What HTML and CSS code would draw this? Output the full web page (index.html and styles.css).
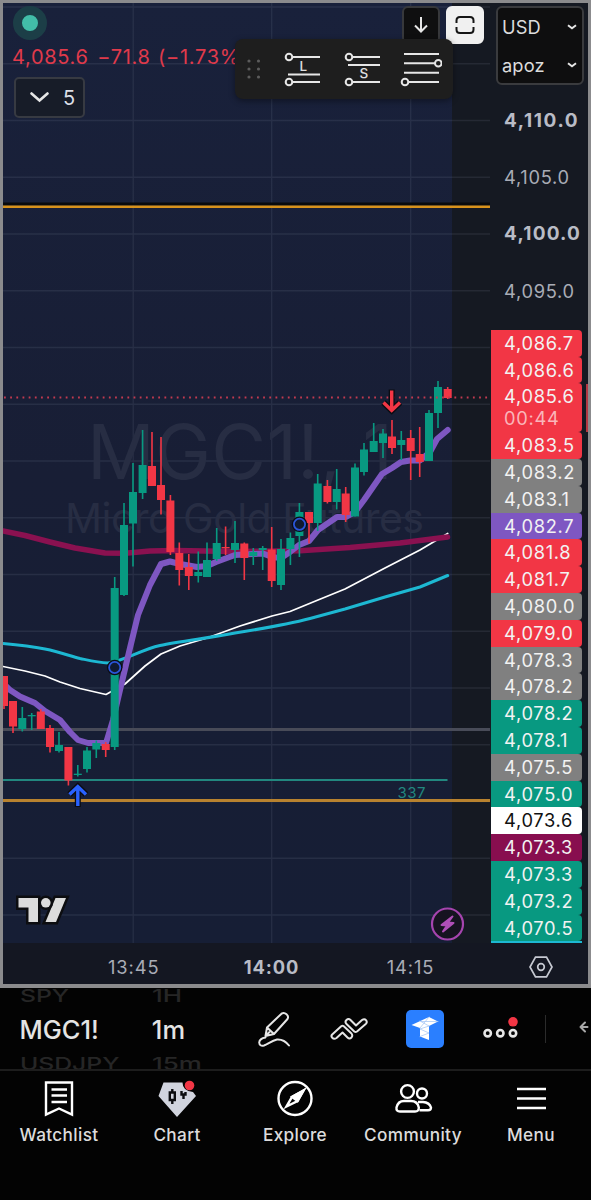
FILE: index.html
```
<!DOCTYPE html>
<html lang="en">
<head>
    <meta charset="UTF-8">
    <meta name="viewport" content="width=device-width, initial-scale=1.0">
    <title>MGC1! | Micro Gold Futures</title>
    <link rel="stylesheet" href="styles.css">
</head>
<body>
    <main class="frame">
        <div class="chart">
            <svg class="plot" viewBox="3 3 487 940" width="487" height="940">
                <defs>
                    <linearGradient id="session" x1="0" y1="0" x2="0" y2="1">
                        <stop offset="0" stop-color="#19213b"/>
                        <stop offset="0.5" stop-color="#181e35"/>
                        <stop offset="1" stop-color="#161e35"/>
                    </linearGradient>
                </defs>
                <rect x="3" y="3" width="449" height="940" fill="url(#session)"/>
                <g id="grid"></g>
                <g class="watermark">
                    <text x="87" y="479" font-size="75" textLength="306">MGC1!, 1</text>
                    <text x="65" y="533" font-size="41" textLength="359">Micro Gold Futures</text>
                </g>
                <path d="M3 204H490" stroke="#090a0d" stroke-width="3"/>
                <path d="M3 206.8H490" stroke="#d8921c" stroke-width="2.4"/>
                <path d="M3 729.5H490" stroke="#484b58" stroke-width="3"/>
                <path d="M3 780H447.5" stroke="#22877f" stroke-width="1.8"/>
                <path d="M3 800.5H490" stroke="#b8822f" stroke-width="3"/>
                <text class="volume" x="397.5" y="798">337</text>
                <g class="averages">
                    <path stroke="#fff" stroke-width="1.7" d="M3 666.5L25 671L45 676L60 682L80 688.5L106 694.5L114 690L125 684L145 666L161 654L180 646L207 638L240 626L272 616L290 611.5L318 600L345 589L385 568L420 550L447.7 533.5"/>
                    <path stroke="#1db8d2" stroke-width="3" d="M3 643.5C20 645 30 646 45 649C60 652 70 656 80 658.5C92 661 98 662.5 108 663C125 661 140 650 160 645.5C180 641 210 638 235 633C260 629 285 625 310 618.5L345 609L385 597L420 587L447.7 575.5"/>
                    <path stroke="#8a1150" stroke-width="5.6" d="M3 531L25 535.5L50 542L75 548L105 553L125 553.3L150 551L175 550.5L235 551.5L300 550.8L350 547.5L400 543L447.5 537"/>
                    <path stroke="#7e57c2" stroke-width="6" d="M3 683L10 690L20 696.5L35 703L45 711L60 720L70 732L78 740L88 743L106 743L113 720L120 690L130 648L138 615L150 585L161 564L170 561.5L180 564L197 567L207 566L216 562L235 555L253 554L263 553.5L272 557L281 558L290 552L299 545L309 541L318 530L337 517L346 517L355 512L364 500L382 474L392 468L401 462L410 460.5L420 460.5L430 452L437 439L447.7 430"/>
                </g>
                <g id="candles"></g>
                <path class="last-price" d="M4 397.5H490"/>
                <g class="markers">
                    <circle class="halo" cx="114.7" cy="667.5" r="7.8"/>
                    <circle cx="114.7" cy="667.5" r="5.6"/>
                    <circle class="halo" cx="299.5" cy="524.3" r="7.8"/>
                    <circle cx="299.5" cy="524.3" r="5.6"/>
                </g>
                <g class="arrow arrow-buy">
                    <path class="halo" d="M77.8 807V787M69.5 794.5L77.8 786.5L86 794.5"/>
                    <path d="M77.8 806V787M69.5 794.5L77.8 786.5L86 794.5"/>
                </g>
                <g class="arrow arrow-sell">
                    <path class="halo" d="M391.7 389.5V410M383.5 402.5L391.7 410.5L400 402.5"/>
                    <path d="M391.7 390.5V410M383.5 402.5L391.7 410.5L400 402.5"/>
                </g>
                <!-- logo -->
                <g fill="#dcdcdc" stroke="#0c0d10" stroke-width="5" paint-order="stroke">
                    <path d="M18.5 898H38V922H28.5V907.5H18.5Z"/>
                    <path d="M55.5 898H66L56 922H45.5Z"/>
                    <circle cx="45.8" cy="902.8" r="4.8"/>
                </g>
                <circle cx="447.5" cy="924" r="15.5" fill="#161320" stroke="#a544ae" stroke-width="2.2"/>
                <path d="M452.5 916.5L441.5 925L447 925.5L443 931.5L453.5 923L448 922.5Z" fill="#b04fb8" stroke="#b04fb8" stroke-linejoin="round"/>
            </svg>

            <aside class="price-axis">
                <div class="currency">
                    <div>USD <svg width="10" height="6" viewBox="0 0 10 6"><path d="M1 1.2L5 4.2L9 1.2"/></svg></div>
                    <div>apoz <svg width="10" height="6" viewBox="0 0 10 6"><path d="M1 1.2L5 4.2L9 1.2"/></svg></div>
                </div>
                <div class="ticks">
                    <span class="bold">4,110.0</span>
                    <span>4,105.0</span>
                    <span class="bold">4,100.0</span>
                    <span>4,095.0</span>
                </div>
                <div class="tags">
                    <span class="red">4,086.7</span>
                    <span class="red">4,086.6</span>
                    <span class="red last">4,085.6<small>00:44</small></span>
                    <span class="red">4,083.5</span>
                    <span class="gray">4,083.2</span>
                    <span class="gray">4,083.1</span>
                    <span class="purple">4,082.7</span>
                    <span class="red">4,081.8</span>
                    <span class="red">4,081.7</span>
                    <span class="gray">4,080.0</span>
                    <span class="red">4,079.0</span>
                    <span class="gray">4,078.3</span>
                    <span class="gray">4,078.2</span>
                    <span class="green">4,078.2</span>
                    <span class="green">4,078.1</span>
                    <span class="gray">4,075.5</span>
                    <span class="green">4,075.0</span>
                    <span class="white">4,073.6</span>
                    <span class="wine">4,073.3</span>
                    <span class="green">4,073.3</span>
                    <span class="green">4,073.2</span>
                    <span class="green">4,070.5</span>
                    <i class="cyan"></i>
                </div>
            </aside>
        </div>

        <div class="time-axis">
            <span>13:45</span>
            <span class="bold">14:00</span>
            <span>14:15</span>
            <svg width="24" height="22" viewBox="0 0 24 22"><path d="M6.5 1.2H17.5L23 11L17.5 20.8H6.5L1 11Z"/><circle cx="12" cy="11" r="3.3"/></svg>
        </div>

        <div class="legend">
            <span class="status"></span>
            <div class="quote"><span>4,085.6</span><span>−71.8</span><span>(−1.73%)</span></div>
            <button class="collapse">
                <svg width="19" height="11" viewBox="0 0 19 11"><path d="M1.5 1.5L9.5 8.5L17.5 1.5"/></svg>
                5
            </button>
        </div>

        <div class="chart-buttons">
            <button><svg width="16" height="18" viewBox="0 0 16 18"><path d="M8 1V15.5M2 9.5L8 15.5L14 9.5"/></svg></button>
            <button class="light"><svg width="20" height="20" viewBox="0 0 20 20"><path d="M1.5 8V5.5Q1.5 2 5 2H15Q18.5 2 18.5 5.5V8M1.5 12V14.5Q1.5 18 5 18H15Q18.5 18 18.5 14.5V12"/></svg></button>
        </div>

        <div class="drawing-bar">
            <svg class="grip" width="14" height="20" viewBox="0 0 14 20">
                <circle cx="2" cy="2" r="1.6"/><circle cx="11.5" cy="2" r="1.6"/>
                <circle cx="2" cy="10" r="1.6"/><circle cx="11.5" cy="10" r="1.6"/>
                <circle cx="2" cy="18" r="1.6"/><circle cx="11.5" cy="18" r="1.6"/>
            </svg>
            <svg width="36" height="36" viewBox="0 0 36 36">
                <circle cx="5" cy="6" r="3.3"/><path d="M8.3 6H36M4 23.5H36M8.3 31H36"/><circle cx="5" cy="31" r="3.3"/>
                <text x="15.5" y="19.5">L</text>
            </svg>
            <svg width="36" height="36" viewBox="0 0 36 36">
                <circle cx="5" cy="6" r="3.3"/><path d="M8.3 6H36M4 14H36M8.3 31H36"/><circle cx="5" cy="31" r="3.3"/>
                <text x="15.5" y="27">S</text>
            </svg>
            <svg class="wide" width="42" height="36" viewBox="0 0 42 36">
                <path d="M4 3H39M4 12.3H35M4 21.7H39M8.3 31H39"/><circle cx="38.3" cy="12.3" r="3.3"/><circle cx="5" cy="31" r="3.3"/>
            </svg>
        </div>
    </main>

    <section class="toolbar">
        <div class="wheel symbol">
            <span>SPY</span>
            <strong>MGC1!</strong>
            <span>USDJPY</span>
        </div>
        <div class="wheel interval">
            <span>1H</span>
            <strong>1m</strong>
            <span>15m</span>
        </div>
        <div class="tools">
            <svg width="32" height="36" viewBox="0 0 32 36">
                <path d="M7.5 25L9 16.5L23.5 2.7Q26 1 28.5 3.2Q31 5.5 29.5 8L16 23Z M9 16.5L16 23M7.5 25L11.5 21"/>
                <path d="M7.5 26.5Q1.5 27.5 1.2 31.5Q1.5 35.5 6 34.5C10 33 14 29.5 19 28.5Q26 28 31 34.5"/>
            </svg>
            <svg width="38" height="24" viewBox="0 0 38 24">
                <path d="M2.2 17.5L11.2 9.2Q12.5 8.2 13.8 9.2L21.5 16.5Q23 18.5 21.5 20.5Q19.5 22.5 17.5 20.5L12.5 15.5L6.5 21Q4 22.5 2.2 20.7Q.7 19 2.2 17.5Z"/>
                <path d="M16.5 3Q18.5 1 20.5 3L26 8.5L32 3Q34.5 1.3 36 3.2Q37.5 5 36 6.7L27 14.5Q25.5 15.5 24.3 14.5L16.5 7Q14.5 5 16.5 3Z"/>
            </svg>
            <svg class="app" width="38" height="38" viewBox="0 0 38 38">
                <rect width="38" height="38" rx="5"/>
                <path d="M5.5 15L23 7L32 11.5L23 16V30L14 26.5V18Z"/>
                <path class="seams" d="M14 11L23 16M14 18L23 7M23 16L14 19L23 23L14 26.5M15 11.5L32 11.5"/>
            </svg>
            <svg width="36" height="24" viewBox="0 0 36 24">
                <g stroke-width="2.6"><circle cx="4.7" cy="16.2" r="3.2"/><circle cx="17.3" cy="16.2" r="3.2"/><circle cx="30" cy="16.2" r="3.2"/></g>
                <circle class="dot" cx="30" cy="4.8" r="4.8"/>
            </svg>
            <i class="divider"></i>
            <svg class="back" width="12" height="14" viewBox="0 0 12 14"><path d="M6 2.5L1.5 7L6 11.5M1.5 7H8.5"/></svg>
        </div>
    </section>

    <nav class="tabs">
        <a>
            <svg width="40" height="38" viewBox="0 0 40 38"><path d="M7 2.5H33V34.5L20 28.5L7 34.5Z"/><path d="M12.5 9.5H28M12.5 15.5H28M12.5 22H28"/></svg>
            Watchlist
        </a>
        <a>
            <svg width="40" height="38" viewBox="0 0 40 38">
                <path class="gem" d="M6.5 2.5H25.5Q25.5 11 36 12L39 16L20 37L1.5 16Z"/>
                <g class="bars"><path d="M12.8 12.5H17.8V20H12.8ZM15.3 9V12M15.3 20.5V24"/><path d="M24.5 11V14.5H28.5V12M26.5 14.5V19"/></g>
                <circle class="dot" cx="32.5" cy="5.5" r="4.8"/>
            </svg>
            Chart
        </a>
        <a>
            <svg width="40" height="38" viewBox="0 0 40 38"><circle cx="20" cy="18.5" r="16.5"/><path d="M28.5 10.5L17 17L11.5 26.5L22.5 21Z"/><path d="M28.5 10.5L17 17L22.5 21Z" fill="#fff"/></svg>
            Explore
        </a>
        <a>
            <svg width="40" height="38" viewBox="0 0 40 38"><circle cx="14.5" cy="11.5" r="6.4"/><circle cx="29" cy="13.5" r="5"/><path d="M7 31.5Q3 31.5 3.5 27.5Q5 21 11 21H18Q24.5 21 25.8 27.5Q26 31.5 22 31.5Z"/><path d="M25 22H30Q36.5 22.5 38 27.5Q38 30.3 35 30.3H26.5"/></svg>
            Community
        </a>
        <a>
            <svg width="40" height="38" viewBox="0 0 40 38"><path d="M6 9H35M6 18.5H35M6 28H35"/></svg>
            Menu
        </a>
    </nav>

    <script>
        // x, high, body top, body bottom, low, direction (1 = up)
        const candles = [
            [4, 676, 676, 706, 709, 0], [13, 701, 701, 726.5, 733, 0], [22.3, 707, 718, 729, 731.5, 1],
            [31.7, 713, 715, 716.3, 730, 1], [40.8, 709, 711.5, 729, 729, 0], [50, 725, 728, 747, 752.5, 0],
            [59, 732, 745, 751, 752.5, 1], [68.4, 747, 747, 780.5, 785.5, 0], [77.8, 765, 773.7, 775, 776.5, 1],
            [87, 747, 750.5, 769, 772.5, 1], [96.3, 740.5, 743, 749.5, 758, 1], [105.7, 742, 744, 750, 757, 0],
            [114.7, 577, 588, 747, 750, 1], [124, 503, 525, 595, 596, 1], [133, 463, 492, 523.5, 566.5, 1],
            [142.6, 430, 465, 493, 499, 1], [152, 432, 466, 486, 486, 0], [161, 437, 485, 500, 514.5, 0],
            [170.4, 495, 500.5, 552, 555, 0], [179.3, 542.5, 553, 570, 585.5, 0], [188.8, 554, 567, 576, 590, 0],
            [198.3, 551.5, 572, 576, 582.5, 1], [207, 542.5, 560, 577, 577, 1], [216.7, 528, 543, 559, 561, 1],
            [225.6, 526.5, 547, 548.3, 555, 0], [235, 521, 543, 550, 563, 1], [244.3, 542.5, 543.5, 558, 580, 0],
            [253.3, 548, 552, 556, 565, 1], [262.7, 546, 548, 550, 570, 1], [271.7, 527, 549.5, 581, 587, 0],
            [281, 539, 549, 585, 590, 1], [290.4, 532.5, 538, 549, 565, 1], [299.4, 503, 512, 536, 557, 1],
            [309, 512, 512, 523, 543.5, 0], [317.7, 474, 483.5, 523, 531, 1], [327.4, 480, 486, 502, 503.5, 0],
            [336.7, 469, 489, 502, 509.5, 1], [345.7, 487, 493.5, 515, 522, 0], [355, 463.5, 467.5, 516.5, 516.5, 1],
            [364, 443, 449.5, 472, 475.5, 1], [373.7, 423, 441, 452, 452, 1], [383, 429, 433.5, 443, 458, 1],
            [392, 420, 436.5, 448, 454, 0], [401.3, 431, 440, 445, 460, 1], [410.7, 430, 438, 451, 480, 0],
            [419.7, 427, 454, 462, 477, 0], [429, 410, 413, 461, 461, 1], [438, 381, 387, 413, 428, 1],
            [447.7, 387, 389, 398, 399, 0]
        ];
        document.getElementById("candles").innerHTML = candles.map(([x, high, top, bottom, low, up]) =>
            `<g class="${up ? "up" : "down"}"><rect x="${x - 0.8}" y="${high}" width="1.6" height="${low - high}"/><rect x="${x - 4}" y="${top}" width="8" height="${bottom - top}"/></g>`
        ).join("");

        let lines = "";
        for (let i = 0; i < 17; i++) {
            lines += `M3 ${7 + i * 56.75}H490`;
        }
        [133.2, 271.7, 410.7].forEach(x => lines += `M${x} 3V943`);
        document.getElementById("grid").innerHTML = `<path d="${lines}"/>`;
    </script>
</body>
</html>
```
FILE: styles.css
```
* {
    box-sizing: border-box;
}
body {
    margin: 0;
    height: 1200px;
    overflow: hidden;
    background-color: #030303;
    color: #dcdcdc;
    font-family: Inter, "Liberation Sans", sans-serif;
}
svg {
    display: block;
    flex: none;
    fill: none;
    stroke: #e6e6e6;
    stroke-width: 2;
}
button {
    font: inherit;
    color: inherit;
    padding: 0;
}
.frame {
    position: relative;
    height: 988px;
    border: 3px solid #8b8b8d;
    border-bottom-width: 4px;
    background-color: #151922;
    overflow: hidden;
}
.chart {
    display: flex;
    height: 940px;
}
.plot {
    stroke: none;
}
#grid path {
    stroke: #969cb4;
    stroke-opacity: 0.13;
    stroke-width: 1.3;
}
.watermark {
    fill: #272d43;
}
.volume {
    fill: #22877f;
    font-size: 15px;
    letter-spacing: 0.5px;
}
.averages path {
    fill: none;
    stroke-linecap: round;
    stroke-linejoin: round;
}
.up {
    fill: #089981;
}
.down {
    fill: #f23645;
}
.last-price {
    stroke: #c23a50;
    stroke-width: 1.8;
    stroke-dasharray: 1.8 4.37;
}
.markers circle {
    fill: #101a30;
    stroke: #2a55d8;
    stroke-width: 1.8;
}
.markers .halo {
    fill: #0a0c14;
    stroke: none;
}
.arrow path {
    fill: none;
    stroke-width: 3.4;
}
.arrow .halo {
    stroke: #0b0c12;
    stroke-width: 6;
}
.arrow-buy path:last-child {
    stroke: #2962ff;
}
.arrow-sell path:last-child {
    stroke: #f23645;
}

/* price scale */
.price-axis {
    flex: 1;
    font-size: 18.3px;
    letter-spacing: 0.7px;
}
.currency {
    width: 88px;
    height: 79px;
    margin: 3px 0 0 6px;
    padding: 0 5px 0 4px;
    border: 2px solid #3a3b3e;
    border-radius: 6px;
    background-color: #0e0e0f;
    color: #dcdcdc;
    letter-spacing: 0.1px;
}
.currency div {
    display: flex;
    align-items: center;
    justify-content: space-between;
    height: 38px;
}
.ticks {
    display: flex;
    flex-direction: column;
    height: 227px;
    margin: 7px 0 10.8px;
    color: #a9acb6;
}
.ticks span {
    flex: 1;
    display: flex;
    align-items: center;
    padding-left: 14px;
}
.bold {
    font-weight: 700;
    color: #b9bcc6;
}
.ticks .bold {
    font-size: 19px;
    letter-spacing: 1.2px;
}
.ticks .bold:first-child {
    letter-spacing: 1.6px;
}
.tags {
    position: relative;
    width: 91px;
    margin-left: 1px;
    color: #f2f2f2;
}
.tags span {
    display: block;
    height: 26.8px;
    line-height: 26px;
    padding-left: 13px;
    border-radius: 0 4px 4px 0;
}
.tags .last {
    height: 48.8px;
}
.tags::after {
    content: "";
    position: absolute;
    left: 95px;
    top: 54px;
    width: 2px;
    height: 48px;
    background-color: #b33843;
}
.tags small {
    display: block;
    font-size: 18.3px;
    line-height: 19px;
    color: #fab5ba;
}
.tags .red {
    background-color: #f23645;
}
.tags .gray {
    background-color: #808080;
}
.tags .purple {
    background-color: #7e57c2;
}
.tags .green {
    background-color: #089981;
}
.tags .white {
    background-color: #fff;
    color: #111;
}
.tags .wine {
    background-color: #880e4f;
}
.tags .cyan {
    display: block;
    height: 1.5px;
    background-color: #1db8d2;
}

.time-axis {
    display: grid;
    grid-template-columns: 199.5px 138px 140px 1fr;
    align-items: center;
    height: 41px;
    padding-top: 6px;
    background-color: #141722;
    color: #a9acb6;
    font-size: 18.3px;
    letter-spacing: 0.9px;
    text-align: center;
}
.time-axis span:first-child {
    padding-left: 62px;
}
.time-axis svg {
    margin-left: 48px;
    stroke: #c6c9d2;
    stroke-width: 1.7;
}

/* overlays */
.legend {
    position: absolute;
    top: 3px;
    left: 10px;
    color: #e03a4b;
}
.status {
    display: block;
    width: 34px;
    height: 34px;
    border: 9px solid #1c3e47;
    border-radius: 50%;
    background-color: #42bda8;
}
.quote {
    display: flex;
    gap: 7.5px;
    margin: 4px 0 0 -1px;
    font-size: 20px;
    line-height: 27px;
    letter-spacing: 0.7px;
    white-space: nowrap;
}
.quote span:first-child {
    margin-right: 1px;
}
.collapse {
    display: flex;
    align-items: center;
    gap: 14px;
    width: 71px;
    height: 41px;
    margin: 6px 0 0 1px;
    padding-left: 14px;
    border: 2px solid #373a42;
    border-radius: 5px;
    background-color: #171c28;
    color: #dcdfe6;
    font-size: 20px;
}
.collapse svg {
    stroke-width: 2.6;
    stroke-linecap: round;
}
.chart-buttons {
    position: absolute;
    top: 3px;
    left: 398.5px;
    display: flex;
    gap: 6px;
}
.chart-buttons button {
    display: flex;
    align-items: center;
    justify-content: center;
    width: 38px;
    height: 38px;
    border: 2px solid #37383b;
    border-radius: 6px;
    background-color: #0f0f10;
}
.chart-buttons .light {
    border-color: #f0f0f0;
    background-color: #f0f0f0;
}
.light svg {
    stroke: #151515;
}
.drawing-bar {
    position: absolute;
    top: 36px;
    left: 232px;
    display: flex;
    align-items: center;
    width: 218px;
    height: 60px;
    padding-left: 13px;
    border-radius: 8px;
    background-color: #1e1e1e;
    box-shadow: 0 2px 6px rgba(0, 0, 0, 0.4);
}
.drawing-bar svg {
    margin-right: 24px;
    stroke-width: 2;
}
.drawing-bar .grip {
    margin: 0 23px 0 -1px;
    fill: #5c5c5c;
    stroke: none;
}
.drawing-bar .wide {
    margin: 0 0 0 -4px;
}
.drawing-bar text {
    fill: #e0e0e0;
    stroke: none;
    font-size: 13.5px;
    font-weight: 500;
}

/* bottom toolbar */
.toolbar {
    display: flex;
    height: 83px;
    border-bottom: 2px solid #1d1d1d;
    overflow: hidden;
}
.wheel {
    display: flex;
    flex-direction: column;
    align-items: flex-start;
    justify-content: center;
    height: 83px;
    line-height: 34px;
    font-size: 24px;
}
.wheel span {
    color: #262626;
    font-weight: 500;
    transform: scale(1.03, 0.72);
    transform-origin: left;
}
.wheel strong {
    font-weight: 500;
    color: #e4e4e4;
    font-size: 25.5px;
}
.symbol {
    width: 134px;
    margin-left: 19.5px;
}
.interval {
    width: 107.5px;
}
.interval span {
    transform: scale(1.08, 0.72);
}
.tools {
    flex: none;
    display: flex;
    align-items: center;
    height: 81px;
}
.tools svg {
    stroke-linejoin: round;
    stroke-linecap: round;
    margin-right: 40px;
}
.tools .app {
    margin: 0 39px 0 -2px;
    stroke: none;
}
.app rect {
    fill: #2a7fff;
}
.app path {
    fill: #fff;
}
.tools .app .seams {
    fill: none;
    stroke: #a9c9f5;
    stroke-width: 0.8;
}
.dot {
    fill: #f23645;
    stroke: none;
}
.divider {
    width: 1px;
    height: 28px;
    margin-left: -14px;
    background-color: #2b2b2b;
}
.tools .back {
    margin: 0 0 4px 33px;
    stroke: #a8a8a8;
}

.tabs {
    display: grid;
    grid-template-columns: repeat(5, 118px);
    padding-top: 8.5px;
}
.tabs a {
    display: flex;
    flex-direction: column;
    align-items: center;
    gap: 5px;
    font-size: 17.2px;
    font-weight: 500;
    line-height: 24px;
    letter-spacing: 0.35px;
}
.tabs svg {
    stroke: #fff;
    stroke-width: 2.4;
}
.tabs .gem {
    fill: #d1d4de;
    stroke: none;
}
.bars path {
    stroke: #0c0d10;
    stroke-width: 2.4;
}
.tabs .dot {
    stroke: none;
}
```
